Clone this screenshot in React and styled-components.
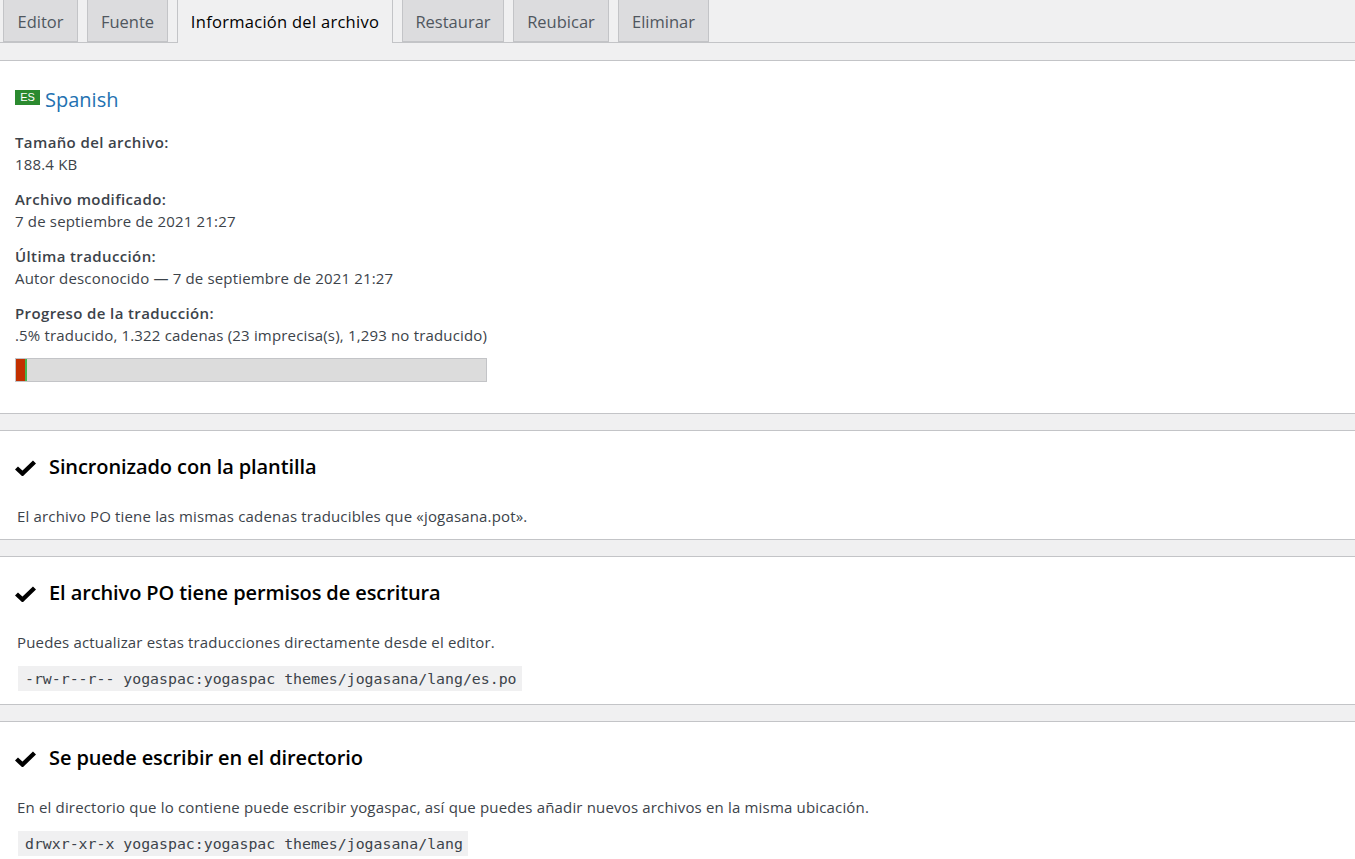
import React from "react";
import styled, { createGlobalStyle } from "styled-components";

const GlobalStyle = createGlobalStyle`
  html, body {
    margin: 0;
    padding: 0;
    background: #f0f0f1;
    overflow: hidden;
  }
  body {
    font-family: "Open Sans", "Noto Sans", sans-serif;
    font-size: 15px;
    letter-spacing: 0.17px;
    color: #3c434a;
  }
`;

const Page = styled.div`
  width: 1355px;
  height: 859px;
  overflow: hidden;
`;

const TabBar = styled.nav`
  display: flex;
  align-items: flex-end;
  gap: 9px;
  height: 42px;
  padding-left: 3px;
  border-bottom: 1px solid #c3c4c7;
`;

const Tab = styled.a`
  box-sizing: border-box;
  display: block;
  width: ${(p) => p.$width}px;
  height: ${(p) => (p.$active ? 43 : 42)}px;
  margin-bottom: ${(p) => (p.$active ? -1 : 0)}px;
  border: 1px solid #c3c4c7;
  border-top: 0;
  border-bottom: ${(p) => (p.$active ? 0 : "1px solid #c3c4c7")};
  background: ${(p) => (p.$active ? "#f0f0f1" : "#dcdcde")};
  color: ${(p) => (p.$active ? "#000" : "#50575e")};
  font-size: 16.5px;
  font-weight: 500;
  letter-spacing: ${(p) => (p.$active ? 0.28 : 0)}px;
  line-height: 43px;
  text-align: center;
`;

const Card = styled.section`
  margin-top: ${(p) => p.$gap}px;
  height: ${(p) => p.$height}px;
  box-sizing: border-box;
  background: #fff;
  border-top: 1px solid #c3c4c7;
  border-bottom: 1px solid #c3c4c7;
  padding: ${(p) => p.$pad};
`;

const Locale = styled.h2`
  display: flex;
  align-items: center;
  margin: 0;
  height: 26px;
  font-size: 20px;
  font-weight: 500;
  letter-spacing: 0;
  color: #2271b1;
`;

const Flag = styled.span`
  display: block;
  width: 25px;
  height: 15px;
  margin: -3px 5px 0 0;
  background: #2b8a2f;
  color: #fff;
  font-family: "Liberation Sans", sans-serif;
  font-size: 11px;
  font-weight: 400;
  line-height: 15px;
  text-align: center;
`;

const Facts = styled.dl`
  margin: 19px 0 0;
`;

const Term = styled.dt`
  font-weight: 600;
  letter-spacing: 0.38px;
  line-height: 22px;
`;

const Value = styled.dd`
  margin: 0 0 13px;
  line-height: 22px;
`;

const ProgressTrack = styled.div`
  display: flex;
  box-sizing: border-box;
  width: 472px;
  height: 24px;
  margin-top: -1px;
  border: 1px solid #c3c4c7;
  background: #dcdcdc;
`;

const ProgressPart = styled.div`
  height: 100%;
  background: ${(p) => p.$color};
`;

const Heading = styled.h3`
  display: flex;
  align-items: center;
  gap: 13px;
  margin: 0;
  height: 26px;
  font-size: 20px;
  font-weight: 600;
  letter-spacing: -0.1px;
  color: #000;
`;

const Check = styled.svg`
  width: 21px;
  height: 17px;
  margin-top: 3px;
  flex: none;
`;

const Para = styled.p`
  margin: 26px 0 0 2px;
  line-height: 22px;
`;

const Code = styled.code`
  display: inline-block;
  margin: 13px 0 0 3px;
  padding: 1px 5px 0 7px;
  background: #f0f0f1;
  font-family: "DejaVu Sans Mono", monospace;
  font-size: 14.85px;
  letter-spacing: 0;
  line-height: 24px;
  color: #3c434a;
`;

const CheckIcon = () => (
  <Check viewBox="0 0 21 17">
    <path d="M1.5 9 L7.5 14.5 L19.5 3" fill="none" stroke="#000" strokeWidth="4.4" />
  </Check>
);

const tabs = [
  ["Editor", 75],
  ["Fuente", 81],
  ["Información del archivo", 216, true],
  ["Restaurar", 102],
  ["Reubicar", 96],
  ["Eliminar", 91],
];

const facts = [
  ["Tamaño del archivo:", "188.4 KB"],
  ["Archivo modificado:", "7 de septiembre de 2021 21:27"],
  ["Última traducción:", "Autor desconocido — 7 de septiembre de 2021 21:27"],
  ["Progreso de la traducción:", ".5% traducido, 1.322 cadenas (23 imprecisa(s), 1,293 no traducido)"],
];

export default function App() {
  return (
    <Page>
      <GlobalStyle />
      <TabBar>
        {tabs.map(([label, width, active]) => (
          <Tab key={label} $width={width} $active={active}>
            {label}
          </Tab>
        ))}
      </TabBar>
      <Card $gap={17} $height={354} $pad="25px 15px 0">
        <Locale>
          <Flag>ES</Flag>
          Spanish
        </Locale>
        <Facts>
          {facts.map(([term, value]) => (
            <div key={term}>
              <Term>{term}</Term>
              <Value>{value}</Value>
            </div>
          ))}
        </Facts>
        <ProgressTrack>
          <ProgressPart $color="#c23000" style={{ width: 9 }} />
          <ProgressPart $color="#46b450" style={{ width: 2 }} />
        </ProgressTrack>
      </Card>
      <Card $gap={16} $height={110} $pad="22px 15px 0">
        <Heading>
          <CheckIcon />
          Sincronizado con la plantilla
        </Heading>
        <Para>El archivo PO tiene las mismas cadenas traducibles que «jogasana.pot».</Para>
      </Card>
      <Card $gap={16} $height={149} $pad="22px 15px 0">
        <Heading>
          <CheckIcon />
          El archivo PO tiene permisos de escritura
        </Heading>
        <Para>Puedes actualizar estas traducciones directamente desde el editor.</Para>
        <Code>-rw-r--r-- yogaspac:yogaspac themes/jogasana/lang/es.po</Code>
      </Card>
      <Card $gap={16} $height={149} $pad="22px 15px 0">
        <Heading>
          <CheckIcon />
          Se puede escribir en el directorio
        </Heading>
        <Para>
          En el directorio que lo contiene puede escribir yogaspac, así que puedes añadir nuevos archivos en la misma ubicación.
        </Para>
        <Code>drwxr-xr-x yogaspac:yogaspac themes/jogasana/lang</Code>
      </Card>
    </Page>
  );
}
